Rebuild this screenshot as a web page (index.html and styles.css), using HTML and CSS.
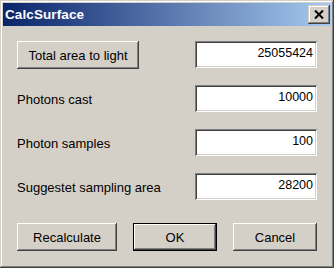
FILE: index.html
```html
<!DOCTYPE html>
<html>
<head>
<meta charset="utf-8">
<link rel="stylesheet" href="styles.css">
</head>
<body>
<div class="window">
  <div class="titlebar">
    <span class="title">CalcSurface</span>
    <div class="close">
      <svg width="10" height="9" viewBox="0 0 10 9"><path d="M1 0.5 L9 8.5 M9 0.5 L1 8.5" stroke="#000" stroke-width="2" fill="none"/></svg>
    </div>
  </div>
  <div class="content">
    <div class="row">
      <div class="btn wide">Total area to light</div>
      <div class="field">25055424</div>
    </div>
    <div class="row">
      <span class="label">Photons cast</span>
      <div class="field">10000</div>
    </div>
    <div class="row">
      <span class="label">Photon samples</span>
      <div class="field">100</div>
    </div>
    <div class="row">
      <span class="label">Suggestet sampling area</span>
      <div class="field">28200</div>
    </div>
    <div class="buttons">
      <div class="btn recalc">Recalculate</div>
      <div class="btn ok default">OK</div>
      <div class="btn ok">Cancel</div>
    </div>
  </div>
</div>
</body>
</html>
```
FILE: styles.css
```css
html, body {
  margin: 0;
  padding: 0;
  background: #d4d0c8;
}
.window {
  width: 334px;
  height: 268px;
  box-sizing: border-box;
  padding: 3px;
  background: #d4d0c8;
  box-shadow: inset -1px -1px #404040, inset 1px 1px #d4d0c8, inset -2px -2px #808080, inset 2px 2px #ffffff;
  font-family: "Liberation Sans", Arial, sans-serif;
  font-size: 13px;
  color: #000;
}
.titlebar {
  height: 23px;
  background: linear-gradient(to right, #0a246a, #a6caf0);
  display: flex;
  align-items: center;
  justify-content: space-between;
  padding: 0 1px 0 2px;
}
.title {
  color: #fff;
  font-weight: bold;
  font-size: 13.5px;
  letter-spacing: 0.1px;
}
.close {
  width: 22px;
  height: 19px;
  box-sizing: border-box;
  background: #d4d0c8;
  box-shadow: inset -1px -1px #404040, inset 1px 1px #d4d0c8, inset -2px -2px #808080, inset 2px 2px #ffffff;
  display: flex;
  align-items: center;
  justify-content: center;
  padding: 0 1px 1px 0;
}
.close svg { display: block; }
.content {
  padding: 15px 14px 0 14px;
  display: flex;
  flex-direction: column;
  gap: 16px;
}
.row {
  height: 28px;
  display: flex;
  align-items: center;
  justify-content: space-between;
}
.label {
  padding-top: 1px;
}
.field {
  width: 122px;
  height: 27px;
  align-self: flex-start;
  box-sizing: border-box;
  background: #fff;
  box-shadow: inset 1px 1px #808080, inset -1px -1px #ffffff, inset 2px 2px #404040, inset -2px -2px #d4d0c8;
  text-align: right;
  padding: 5px 4px 0 0;
  font-size: 12.5px;
}
.btn {
  height: 28px;
  box-sizing: border-box;
  display: flex;
  align-items: center;
  justify-content: center;
  background: #d4d0c8;
  box-shadow: inset -1px -1px #404040, inset 1px 1px #ffffff, inset -2px -2px #808080, inset 2px 2px #d4d0c8;
}
.wide { width: 122px; }
.buttons {
  margin-top: 6px;
  display: flex;
  gap: 16px;
}
.recalc { width: 100px; }
.ok { width: 84px; }
.default {
  border: 1px solid #000;
}
```
